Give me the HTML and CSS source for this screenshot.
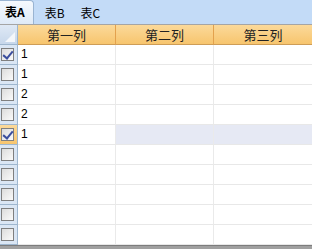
FILE: index.html
```html
<!DOCTYPE html>
<html lang="zh">
<head>
<meta charset="UTF-8" />
<title>表格</title>
<link rel="stylesheet" href="styles.css">
</head>
<body>

<div class="tabs">
  <div class="tab active">表A</div>
  <div class="tab">表B</div>
  <div class="tab">表C</div>
</div>

<div class="grid">
  <div class="corner"><span class="tri"></span></div>
  <div class="colhead">第一列</div>
  <div class="colhead">第二列</div>
  <div class="colhead last">第三列</div>

  <div class="rowhead"><span class="chk on"></span></div>
  <div class="cell">1</div><div class="cell"></div><div class="cell last"></div>

  <div class="rowhead"><span class="chk"></span></div>
  <div class="cell">1</div><div class="cell"></div><div class="cell last"></div>

  <div class="rowhead"><span class="chk"></span></div>
  <div class="cell">2</div><div class="cell"></div><div class="cell last"></div>

  <div class="rowhead"><span class="chk"></span></div>
  <div class="cell">2</div><div class="cell"></div><div class="cell last"></div>

  <div class="rowhead current"><span class="chk on"></span></div>
  <div class="cell">1</div><div class="cell sel"></div><div class="cell sel last"></div>

  <div class="rowhead"><span class="chk"></span></div>
  <div class="cell"></div><div class="cell"></div><div class="cell last"></div>

  <div class="rowhead"><span class="chk"></span></div>
  <div class="cell"></div><div class="cell"></div><div class="cell last"></div>

  <div class="rowhead"><span class="chk"></span></div>
  <div class="cell"></div><div class="cell"></div><div class="cell last"></div>

  <div class="rowhead"><span class="chk"></span></div>
  <div class="cell"></div><div class="cell"></div><div class="cell last"></div>

  <div class="rowhead"><span class="chk"></span></div>
  <div class="cell"></div><div class="cell"></div><div class="cell last"></div>
</div>

<div class="bottombar"></div>

</body>
</html>
```

FILE: styles.css
```css
body { margin: 0; width: 312px; height: 249px; overflow: hidden; background: #fff; font-family: "Noto Sans CJK SC", "Liberation Sans", sans-serif; font-size: 12px; color: #000; }

.tabs { height: 24px; background: #c3dbf7; display: flex; align-items: flex-end; }
.tab { height: 22px; line-height: 22px; padding: 0 7px 0 9px; font-size: 12px; }
.tab.active { background: linear-gradient(#f5f9fe, #dfeaf7); border: 1px solid #9ab4d2; border-left: none; border-bottom: none; border-radius: 0 4px 0 0; padding: 0 8px 0 5px; font-weight: bold; height: 23px; margin-right: 2px; }

.grid { display: grid; grid-template-columns: 18px 98px 98px 98px; grid-auto-rows: 20px; border-top: 1px solid #a5a5a5; }

.corner { background: linear-gradient(#dfe9f5, #c7d7eb); border-right: 1px solid #9eb6ce; border-bottom: 1px solid #9eb6ce; position: relative; box-sizing: border-box; }
.tri { position: absolute; right: 2px; bottom: 2px; width: 0; height: 0; border-left: 10px solid transparent; border-bottom: 10px solid #f4f7fb; }

.colhead { background: linear-gradient(#fbd99a, #f7c56e); border-right: 1px solid #e3a14d; border-bottom: 1px solid #ce9d57; box-sizing: border-box; text-align: center; line-height: 19px; font-size: 13px; color: #222; }
.colhead.last { border-right: none; }

.rowhead { background: #dae6f4; border-right: 1px solid #9eb6ce; border-bottom: 1px solid #9eb6ce; box-sizing: border-box; display: flex; align-items: center; padding-left: 1px; }
.rowhead.current { background: linear-gradient(#fbd99a, #f7c56e); }

.chk { width: 11px; height: 11px; border: 1px solid #7f7f7f; background: linear-gradient(135deg, #dcdcdc, #fafafa); box-sizing: content-box; position: relative; }
.chk.on::after { content: ""; position: absolute; left: 3px; top: 0px; width: 4px; height: 8px; border-right: 2px solid #3b4e9e; border-bottom: 2px solid #3b4e9e; transform: rotate(40deg); }

.cell { border-right: 1px solid #eaeaea; border-bottom: 1px solid #e8e8e8; box-sizing: border-box; padding-left: 3px; line-height: 19px; font-family: "Liberation Sans", sans-serif; font-size: 12px; }
.cell.last { border-right: none; }
.cell.sel { background: #e6e9f4; }

.bottombar { height: 5px; background: #a0a0a0; border-top: 1px solid #7d7d7d; }
```
